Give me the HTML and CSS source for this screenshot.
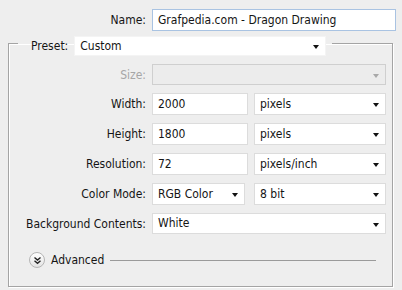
FILE: index.html
```html
<!DOCTYPE html>
<html lang="en">
<head>
    <meta charset="UTF-8">
    <meta name="viewport" content="width=device-width, initial-scale=1.0">
    <title>New Document</title>
    <link rel="stylesheet" href="styles.css">
</head>
<body>
    <div class="dialog">
        <div class="name-row">
            <label for="docName">Name:</label>
            <div class="field name-field" id="docName">Grafpedia.com - Dragon Drawing</div>
        </div>

        <fieldset class="group">
            <legend class="preset">
                <span class="preset-label">Preset:</span>
                <div class="select preset-select">Custom</div>
            </legend>

            <div class="rows">
                <label class="disabled">Size:</label>
                <div class="select size-select"></div>

                <label>Width:</label>
                <div class="pair">
                    <div class="field">2000</div>
                    <div class="select">pixels</div>
                </div>

                <label>Height:</label>
                <div class="pair">
                    <div class="field">1800</div>
                    <div class="select">pixels</div>
                </div>

                <label>Resolution:</label>
                <div class="pair">
                    <div class="field">72</div>
                    <div class="select">pixels/inch</div>
                </div>

                <label>Color Mode:</label>
                <div class="pair mode-pair">
                    <div class="select">RGB Color</div>
                    <div class="select">8 bit</div>
                </div>

                <label>Background Contents:</label>
                <div class="select bg-select">White</div>
            </div>

            <div class="advanced">
                <span class="toggle">
                    <svg width="9" height="9" viewBox="0 0 9 9">
                        <path d="M1.5 1.5 L4.5 4 L7.5 1.5 M1.5 4.8 L4.5 7.3 L7.5 4.8" fill="none" stroke="#222" stroke-width="1.4"/>
                    </svg>
                </span>
                <span class="advanced-label">Advanced</span>
                <span class="rule"></span>
            </div>
        </fieldset>
    </div>
</body>
</html>
```

FILE: styles.css
```css
/* Photoshop style new document dialog */
body {
  margin: 0;
  background-color: #eeeeee;
  font-family: "DejaVu Sans Condensed", "DejaVu Sans", sans-serif;
  font-size: 12px;
  color: #151515;
}

.dialog {
  width: 402px;
  height: 290px;
  padding-top: 9px;
  box-sizing: border-box;
}

label {
  text-align: right;
  align-self: center;
}

.disabled {
  color: #a6a6a6;
}

.name-row {
  display: grid;
  grid-template-columns: 146px 244px;
  column-gap: 6px;
}

.field,
.select {
  height: 22px;
  line-height: 20px;
  box-sizing: border-box;
  background-color: #fff;
  border: 1px solid #dcdcdc;
  padding: 0 5px;
  position: relative;
  white-space: nowrap;
}

.name-field {
  border-color: #a9c3e2;
}

.select::after {
  content: '';
  position: absolute;
  right: 6px;
  top: 9px;
  border-left: 3.5px solid transparent;
  border-right: 3.5px solid transparent;
  border-top: 4px solid #111;
}

.size-select {
  background-color: #ececec;
  border-color: #cfcfcf;
  height: 21px;
}

.size-select::after {
  border-top-color: #a8a8a8;
}

.bg-select {
  height: 21px;
  line-height: 19px;
}

.group {
  margin: -1px 0 0 8px;
  width: 385px;
  height: 257px;
  box-sizing: border-box;
  border: 1px solid #a4a4a4;
  box-shadow: inset 1px 1px 0 #fff, 1px 1px 0 #fff;
  padding: 0 5px 0 0;
}

.preset {
  display: flex;
  align-items: center;
  gap: 6px;
  padding: 6px 6px 0 13px;
  margin-left: 9px;
}

.preset-select {
  width: 252px;
  height: 20px;
  line-height: 18px;
  border-color: #f4f4f4;
}

.preset-select::after {
  top: 8px;
}

.rows {
  display: grid;
  grid-template-columns: 137px 234px;
  column-gap: 6px;
  row-gap: 8px;
  margin-top: 8px;
}

.pair {
  display: grid;
  grid-template-columns: 96px 132px;
  column-gap: 6px;
}

.mode-pair {
  grid-template-columns: 93px 132px;
  column-gap: 9px;
}

.advanced {
  display: flex;
  align-items: center;
  margin: 18px 0 0 20px;
}

.toggle {
  width: 16px;
  height: 16px;
  border-radius: 50%;
  border: 1px solid #b5b5b5;
  background: linear-gradient(#ffffff, #e4e4e4);
  box-sizing: border-box;
  display: flex;
  align-items: center;
  justify-content: center;
}

.advanced-label {
  margin-left: 6px;
}

.rule {
  width: 266px;
  height: 1px;
  margin-left: 6px;
  background-color: #9a9a9a;
}
```
